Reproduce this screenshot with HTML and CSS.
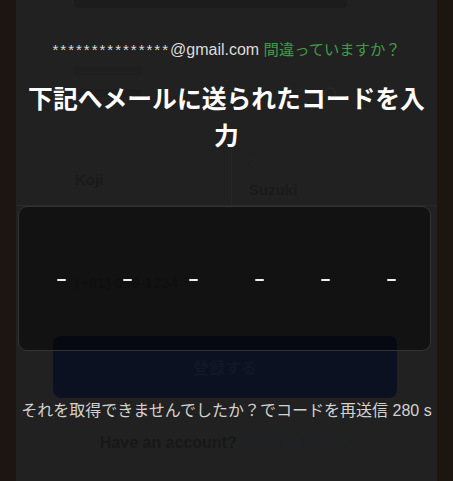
FILE: index.html
```html
<!DOCTYPE html>
<html lang="ja">
<head>
<meta charset="utf-8">
<title>コード入力</title>
<link rel="stylesheet" href="styles.css">
</head>
<body>
<div class="screen">
  <div class="panel">
    <div class="bg-title"></div>
    <div class="bg-label"></div>
    <div class="bg-pass">
      <span class="bg-dots"></span>
      <svg class="bg-eye" width="14" height="14" viewBox="0 0 14 14"><circle cx="7" cy="7" r="5" fill="none" stroke="#262626" stroke-width="2"/></svg>
    </div>
    <div class="bg-names">
      <div class="bg-col"><div class="bg-val first">Koji</div></div>
      <div class="bg-col right"><div class="bg-small">名</div><div class="bg-val">Suzuki</div></div>
    </div>
    <div class="bg-phone">
      <div class="bg-small">電話番号</div>
      <div class="bg-val">(+81) 090-1234</div>
    </div>
    <div class="bg-btn">登録する</div>
    <div class="bg-login">Have an account? <span class="bg-link">ここでログイン</span></div>
  </div>

  <div class="overlay">
    <p class="email"><span class="mask">***************</span>@gmail.com <span class="wrong">間違っていますか？</span></p>
    <h1 class="title">下記へメールに送られたコードを入力</h1>
    <div class="code">
      <span class="dash"></span>
      <span class="dash"></span>
      <span class="dash"></span>
      <span class="dash"></span>
      <span class="dash"></span>
      <span class="dash"></span>
    </div>
    <p class="resend">それを取得できませんでしたか？でコードを再送信 280 s</p>
  </div>
</div>
</body>
</html>
```

FILE: styles.css
```css
html, body {
  margin: 0;
  padding: 0;
}
body {
  background: #1d1510;
  font-family: "Liberation Sans", "Noto Sans CJK JP", sans-serif;
}
.screen {
  position: relative;
  width: 453px;
  height: 481px;
  overflow: hidden;
}
.panel {
  margin: 0 16px;
  height: 481px;
  background: #212121;
  display: flex;
  flex-direction: column;
}
.bg-title {
  margin: 0 90px 0 58px;
  height: 8px;
  border-radius: 0 0 4px 4px;
  background: #1c1c1c;
}
.bg-label {
  margin: 58px 0 0 57px;
  width: 70px;
  height: 9px;
  border-radius: 4px;
  background: #1f1f1f;
}
.bg-pass {
  margin-top: 6px;
  height: 24px;
  display: flex;
  align-items: center;
  justify-content: space-between;
  padding: 0 100px 0 59px;
}
.bg-dots {
  width: 66px;
  height: 8px;
  border-radius: 4px;
  background: #1e1e1e;
}
.bg-names {
  margin-top: 37px;
  height: 63px;
  display: flex;
  border-bottom: 1px solid #292929;
}
.bg-col {
  width: 216px;
  border-right: 1px solid #252525;
  padding-left: 59px;
  box-sizing: border-box;
}
.bg-col.right {
  flex: 1;
  border-right: none;
  padding-left: 17px;
}
.bg-small {
  font-size: 12px;
  line-height: 16px;
  color: #232323;
}
.bg-col .bg-small {
  margin-top: 12px;
}
.bg-val {
  font-size: 15px;
  line-height: 20px;
  font-weight: 700;
  color: #1a1a1a;
}
.bg-val.first {
  margin-top: 28px;
}
.bg-col.right .bg-val {
  margin-top: 10px;
}
.bg-phone {
  margin-top: 36px;
  padding-left: 59px;
  padding-top: 4px;
}
.bg-phone .bg-val {
  margin-top: 11px;
  color: #1d1d1d;
}
.bg-btn {
  margin: 43px 40px 0 37px;
  height: 62px;
  border-radius: 8px;
  background: #0b1120;
  color: #101727;
  font-size: 16px;
  font-weight: 700;
  display: flex;
  align-items: center;
  justify-content: center;
}
.bg-login {
  margin-top: 35px;
  line-height: 20px;
  font-size: 16px;
  font-weight: 700;
  color: #181818;
  text-align: center;
}
.bg-link {
  font-weight: 400;
  color: #1d212b;
}

.overlay {
  position: absolute;
  inset: 0;
  display: flex;
  flex-direction: column;
  align-items: center;
}
.email {
  margin: 40px 0 0;
  line-height: 20px;
  font-size: 16px;
  color: #dcdcdc;
  white-space: nowrap;
  text-align: center;
}
.mask {
  letter-spacing: 2px;
  font-size: 15px;
}
.wrong {
  color: #3d9c4a;
  font-size: 15.3px;
}
.title {
  margin: 21px 0 0;
  width: 400px;
  font-size: 24.8px;
  line-height: 37px;
  font-weight: 700;
  color: #ffffff;
  text-align: center;
}
.code {
  align-self: flex-start;
  margin: 51px 0 0 18px;
  width: 413px;
  height: 145px;
  box-sizing: border-box;
  background: rgba(0, 0, 0, 0.45);
  border: 1px solid #333333;
  border-radius: 9px;
  display: grid;
  grid-template-columns: repeat(6, 66px);
  padding: 3px 0 0 9px;
  align-items: center;
  justify-items: center;
}
.dash {
  width: 9px;
  height: 2px;
  border-radius: 1px;
  background: #f0f0f0;
}
.resend {
  margin: 50px 0 0;
  line-height: 20px;
  font-size: 16px;
  color: #d2d2d2;
  white-space: nowrap;
  text-align: center;
}
```
